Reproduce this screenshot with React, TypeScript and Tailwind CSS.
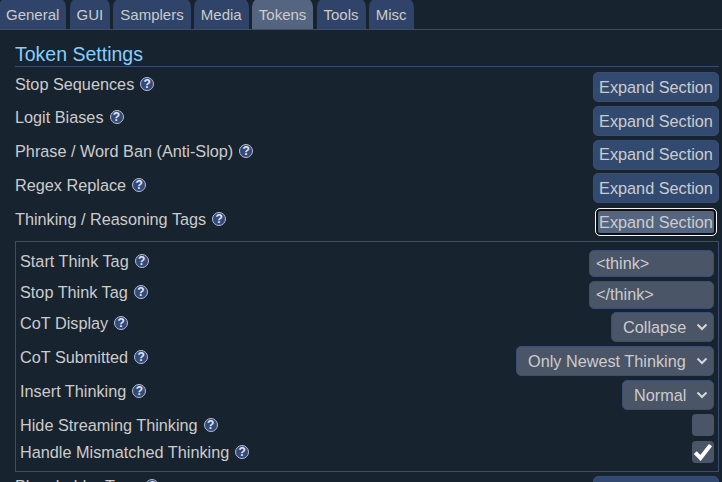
import React from 'react';

const tabs = ['General', 'GUI', 'Samplers', 'Media', 'Tokens', 'Tools', 'Misc'];

const Help = () => (
  <span className="ml-[6px] inline-flex h-[14px] w-[14px] shrink-0 items-center justify-center rounded-full border border-[#b4bfd2] bg-[#34497a] text-[12px] font-bold leading-none text-[#e4e8f0]">
    ?
  </span>
);

const Label = ({ text }: { text: string }) => (
  <div className="flex items-center leading-[20px]">
    <span>{text}</span>
    <Help />
  </div>
);

const SectionRow = ({ text, focused, last }: { text: string; focused?: boolean; last?: boolean }) => (
  <div className="flex h-[33.75px] items-start justify-between">
    <div className={last ? 'pt-[2px]' : 'pt-[3.5px]'}>
      <Label text={text} />
    </div>
    {focused ? (
      <button className="mx-[2px] mt-[3px] h-[28px] w-[122px] rounded-[5px] border border-[#f4f6f9] bg-[#56657f] text-center text-[#cccccc] ring-2 ring-inset ring-[#101010]">
        Expand Section
      </button>
    ) : (
      <button className="mt-[2px] h-[30px] w-[126px] rounded-[5px] border border-[#3a4d72] bg-[#334a70] text-center text-[#cccccc]">
        Expand Section
      </button>
    )}
  </div>
);

const TextRow = ({ text, value, height }: { text: string; value: string; height: string }) => (
  <div className={`flex items-start justify-between ${height}`}>
    <div className="pt-[1px]">
      <Label text={text} />
    </div>
    <input
      readOnly
      value={value}
      className="h-full w-[125px] rounded-[5px] border border-[#3a4d72] bg-[#4a5568] px-[6px] pb-[1px] text-[#cccccc] outline-none"
    />
  </div>
);

const SelectRow = ({ text, value }: { text: string; value: string }) => (
  <div className="flex h-[30px] items-start justify-between">
    <div className="pt-[1px]">
      <Label text={text} />
    </div>
    <div className="relative">
      <select className="h-[30px] appearance-none rounded-[5px] border border-[#3a4d72] bg-[#4a5568] pl-[11px] pr-[26px] text-[#cccccc]">
        <option>{value}</option>
      </select>
      <svg viewBox="0 0 12 8" className="pointer-events-none absolute right-[6px] top-[11px] h-[8px] w-[12px]" fill="none">
        <path d="M1.5 1.5 L6 6 L10.5 1.5" stroke="#d4d6da" strokeWidth="2" />
      </svg>
    </div>
  </div>
);

const CheckRow = ({ text, checked }: { text: string; checked?: boolean }) => (
  <div className="flex h-[22px] items-center justify-between">
    <Label text={text} />
    <span className="flex h-[22px] w-[22px] items-center justify-center rounded-[4px] bg-[#4a5568]">
      {checked && (
        <svg viewBox="0 0 16 16" className="h-[20px] w-[20px]" fill="none">
          <path d="M1.8 8.5 L6 12.8 L14 2.5" stroke="#ffffff" strokeWidth="3.2" />
        </svg>
      )}
    </span>
  </div>
);

export default function App() {
  return (
    <div className="h-[482px] w-[722px] overflow-hidden bg-[#17232f] font-['Liberation_Sans',sans-serif] text-[16.25px] text-[#cccccc]">
      <div className="-mt-[3px] flex h-[33px] gap-[3.15px] border-b border-[#3a4d72]">
        {tabs.map((tab) => (
          <div
            key={tab}
            className={`flex items-center rounded-t-[10px] px-[7px] pt-[4px] text-[15px] first:-ml-[1px] ${
              tab === 'Tokens' ? 'bg-[#56657f]' : 'bg-[#2f4468]'
            }`}
          >
            {tab}
          </div>
        ))}
      </div>
      <div className="pl-[15px] pr-[3px]">
        <h2 className="mt-[12px] h-[25px] border-b border-[#3a4d72] text-[19.5px] leading-[25px] text-[#87cefa]">
          Token Settings
        </h2>
        <div className="mt-[3px]">
          <SectionRow text="Stop Sequences" />
          <SectionRow text="Logit Biases" />
          <SectionRow text="Phrase / Word Ban (Anti-Slop)" />
          <SectionRow text="Regex Replace" />
          <SectionRow text="Thinking / Reasoning Tags" focused />
        </div>
        <div className="mt-[2.25px] flex h-[231px] flex-col border border-[#3a4d72] px-[4px] pb-[8px] pt-[8px]">
          <TextRow text="Start Think Tag" value="<think>" height="h-[27px] mb-[4px]" />
          <TextRow text="Stop Think Tag" value="</think>" height="h-[28px] mb-[3px]" />
          <div className="mb-[4px]"><SelectRow text="CoT Display" value="Collapse" /></div>
          <div className="mb-[4px]"><SelectRow text="CoT Submitted" value="Only Newest Thinking" /></div>
          <div className="mb-[4px]"><SelectRow text="Insert Thinking" value="Normal" /></div>
          <div className="mb-[5px]"><CheckRow text="Hide Streaming Thinking" /></div>
          <CheckRow text="Handle Mismatched Thinking" checked />
        </div>
        <div className="mt-[2px]">
          <SectionRow text="Placeholder Tags" last />
        </div>
      </div>
    </div>
  );
}
